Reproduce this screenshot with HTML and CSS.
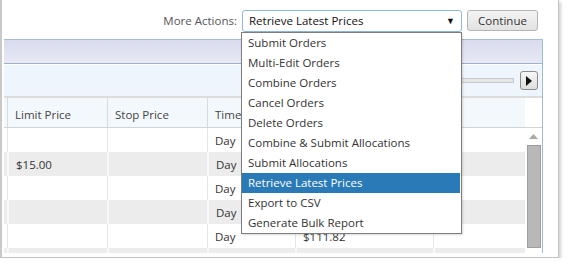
FILE: index.html
```html
<!DOCTYPE html>
<html>
<head>
<meta charset="utf-8">
<link rel="stylesheet" href="styles.css">
</head>
<body>
<div class="frame">
  <div class="topbar">
    <span class="label">More Actions:</span>
    <div class="select">
      <span>Retrieve Latest Prices</span>
      <span class="caret">▼</span>
    </div>
    <button class="btn">Continue</button>
  </div>
  <div class="panel">
    <div class="band"></div>
    <div class="toolbar">
      <div class="track"></div>
      <div class="nav"><svg width="8" height="10" viewBox="0 0 8 10"><path d="M1 0 L7 5 L1 10 Z" fill="#111"/></svg></div>
    </div>
    <div class="grid">
      <div class="rows">
        <div class="row head">
          <div class="c c0"></div><div class="c c1">Limit Price</div><div class="c c2">Stop Price</div><div class="c c3">Time</div><div class="c c4"></div><div class="c c5"></div>
        </div>
        <div class="row">
          <div class="c c0"></div><div class="c c1"></div><div class="c c2"></div><div class="c c3">Day</div><div class="c c4"></div><div class="c c5"></div>
        </div>
        <div class="row alt">
          <div class="c c0"></div><div class="c c1">$15.00</div><div class="c c2"></div><div class="c c3">Day</div><div class="c c4"></div><div class="c c5"></div>
        </div>
        <div class="row">
          <div class="c c0"></div><div class="c c1"></div><div class="c c2"></div><div class="c c3">Day</div><div class="c c4"></div><div class="c c5"></div>
        </div>
        <div class="row alt">
          <div class="c c0"></div><div class="c c1"></div><div class="c c2"></div><div class="c c3">Day</div><div class="c c4"></div><div class="c c5"></div>
        </div>
        <div class="row">
          <div class="c c0"></div><div class="c c1"></div><div class="c c2"></div><div class="c c3">Day</div><div class="c c4">$111.82</div><div class="c c5"></div>
        </div>
        <div class="row alt">
          <div class="c c0"></div><div class="c c1"></div><div class="c c2"></div><div class="c c3"></div><div class="c c4"></div><div class="c c5"></div>
        </div>
      </div>
      <div class="scroll">
        <div class="sc-head"></div>
        <div class="sc-up"><svg width="9" height="5" viewBox="0 0 9 5"><path d="M0 5 L4.5 0 L9 5 Z" fill="#a8a8a8"/></svg></div>
        <div class="thumb"></div>
      </div>
    </div>
  </div>
  <ul class="menu">
    <li>Submit Orders</li>
    <li>Multi-Edit Orders</li>
    <li>Combine Orders</li>
    <li>Cancel Orders</li>
    <li>Delete Orders</li>
    <li>Combine &amp; Submit Allocations</li>
    <li>Submit Allocations</li>
    <li class="sel">Retrieve Latest Prices</li>
    <li>Export to CSV</li>
    <li>Generate Bulk Report</li>
  </ul>
</div>
</body>
</html>
```

FILE: styles.css
```css
* { box-sizing: border-box; }
html, body { margin: 0; padding: 0; background: #fff; }
body {
  font-family: "Open Sans", "Noto Sans", sans-serif;
  font-size: 11.5px;
  color: #333;
}
.frame {
  position: relative;
  width: 559px;
  height: 258px;
  border-left: 2px solid #c9c9c9;
  border-right: 1px solid #c2c2c2;
  border-bottom: 1px solid #c2c2c2;
  box-shadow: 2px 2px 3px rgba(0,0,0,0.18);
  padding-left: 2px;
}
.topbar {
  height: 39px;
  display: flex;
  align-items: center;
  justify-content: flex-end;
  padding-right: 20px;
  padding-top: 2px;
}
.label {
  color: #555;
  margin-right: 5px;
}
.select {
  width: 220px;
  height: 22px;
  border: 1px solid #8fb7d9;
  border-radius: 3px;
  display: flex;
  align-items: center;
  justify-content: space-between;
  padding: 0 6px 0 6px;
  color: #111;
  margin-right: 5px;
}
.caret { font-size: 9px; color: #111; }
.btn {
  width: 71px;
  height: 21px;
  border: 1px solid #b3b3b3;
  border-radius: 3px;
  background: linear-gradient(#f4f4f4, #e2e2e2);
  font-family: inherit;
  font-size: 11.5px;
  color: #333;
  padding: 0;
}
.panel {
  width: 539px;
  height: 214px;
  border-top: 1px solid #a9bccd;
  border-right: 1px solid #9dbbd4;
  overflow: hidden;
}
.band {
  height: 24px;
  background: linear-gradient(#d9dbee, #e8e9f5);
  border-bottom: 1px solid #9fb1c2;
}
.toolbar {
  height: 34px;
  background: #eef5fd;
  border-top: 1px solid #fff;
  border-bottom: 2px solid #dcdcdc;
  display: flex;
  align-items: center;
  justify-content: flex-end;
  padding-right: 4px;
}
.track {
  width: 140px;
  height: 5px;
  background: #e6e6e6;
  border: 1px solid #c8c8c8;
  margin-right: 6px;
}
.nav {
  width: 18px;
  height: 19px;
  border: 1px solid #8c8c8c;
  border-radius: 3px;
  background: linear-gradient(#f6f6f6, #dedede);
  display: flex;
  align-items: center;
  justify-content: center;
}
.grid { display: flex; }
.rows { width: 521px; }
.row { display: flex; height: 24px; background: #fff; }
.row.alt { background: #ececec; }
.row.head { height: 30px; background: #f3f8fd; border-bottom: 1px solid #cfd4d9; }
.c {
  height: 100%;
  display: flex;
  align-items: center;
  padding-left: 7px;
  border-left: 1px solid #e6e6e6;
  white-space: nowrap;
  overflow: hidden;
}
.row.alt .c { border-left: 2px solid #f8f8f8; }
.row.head .c { border-left: 1px solid #d6dbe0; color: #444; padding-top: 4px; }
.c0 { width: 3px; border-left: none !important; padding: 0 !important; }
.c1 { width: 100px; }
.c2 { width: 100px; }
.c3 { width: 88px; }
.c4 { width: 138px; }
.c5 { width: 92px; }
.scroll {
  width: 17px;
  background: #fff;
}
.sc-head { height: 30px; border-bottom: 1px solid #cfd4d9; }
.sc-up { height: 17px; display: flex; align-items: center; justify-content: center; }
.thumb {
  margin-left: 2px;
  width: 14px;
  height: 103px;
  background: #b8b8b8;
  border: 1px solid #9e9e9e;
}
.menu {
  position: absolute;
  left: 239px;
  top: 32px;
  width: 221px;
  margin: 0;
  padding: 0;
  list-style: none;
  background: #fff;
  border: 1px solid #7d7d7d;
  box-shadow: 1px 1px 2px rgba(0,0,0,0.15);
}
.menu li {
  height: 20px;
  line-height: 20px;
  padding-left: 6px;
  color: #333;
}
.menu li.sel {
  background: #2a7ab7;
  color: #fff;
  margin-right: 1px;
}
```
